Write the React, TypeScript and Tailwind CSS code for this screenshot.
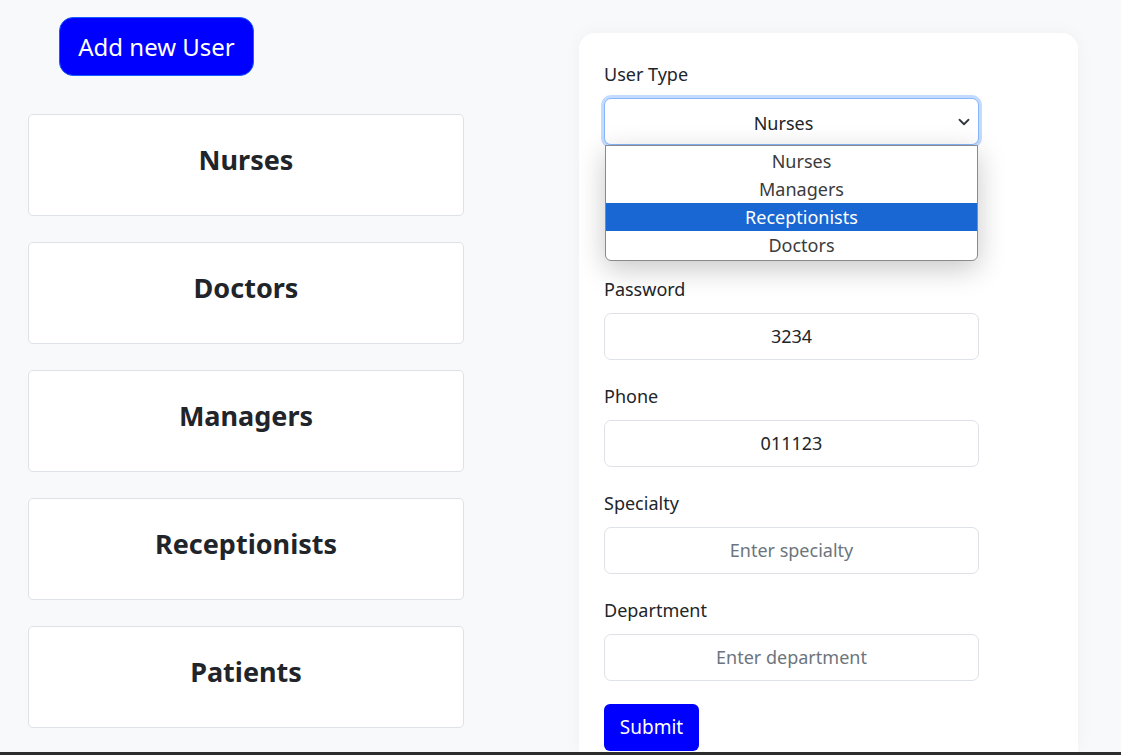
import React from "react";

const font = { fontFamily: '"Noto Sans", "Open Sans", sans-serif' };

function Field({ label, value, placeholder, mb = "mb-[24px]" }: { label: string; value?: string; placeholder?: string; mb?: string }) {
  return (
    <div className={mb}>
      <div className="h-6 leading-6 text-[18px] text-[#212529] mb-[12px]">{label}</div>
      <div className="w-[375px] h-[47px] rounded-[7px] border border-[#dee2e6] bg-white flex items-center justify-center text-[18px]">
        {value ? <span className="text-[#212529]">{value}</span> : <span className="text-[#6c757d]">{placeholder}</span>}
      </div>
    </div>
  );
}

export default function App() {
  const cards = ["Nurses", "Doctors", "Managers", "Receptionists", "Patients"];
  const options = ["Nurses", "Managers", "Receptionists", "Doctors"];
  return (
    <div className="h-[755px] w-[1121px] flex flex-col bg-[#f8f9fa] overflow-hidden" style={font}>
      <div className="flex-1 flex overflow-hidden">
        <div className="ml-[28px] w-[436px] flex flex-col">
          <div className="mt-[17px] ml-[31px] w-[195px] h-[59px] rounded-[14px] bg-[#0000ff] border border-[#1a5cff] flex items-center justify-center text-white text-[24px]">
            <span className="mt-[1px]">Add new User</span>
          </div>
          <div className="mt-[38px] flex flex-col gap-[26px]">
            {cards.map((c) => (
              <div key={c} className="h-[102px] rounded-[5px] border border-[#dee2e6] bg-white flex items-center justify-center">
                <span className="text-[27px] font-bold text-[#212529] -mt-[9px]">{c}</span>
              </div>
            ))}
          </div>
        </div>
        <div className="ml-[115px] mt-[33px] w-[499px] bg-white rounded-t-[16px] shadow-[0_0_18px_rgba(0,0,0,0.04)] pl-[25px] pt-[29px]">
          <div className="mb-[25px] relative">
            <div className="h-6 leading-6 text-[18px] text-[#212529] mb-[12px]">User Type</div>
            <div className="w-[375px] h-[47px] rounded-[7px] border border-[#86b7fe] shadow-[0_0_0_3px_rgba(13,110,253,0.25)] bg-white flex items-center relative text-[18px] text-[#212529] pl-[16px] pr-[32px]">
              <span className="flex-1 text-center pt-[3px]">Nurses</span>
              <svg className="absolute right-[8px] top-[17px]" width="12" height="12" viewBox="0 0 16 16" fill="none">
                <path d="M2 5l6 6 6-6" stroke="#343a40" strokeWidth="2.4" strokeLinecap="round" strokeLinejoin="round" />
              </svg>
            </div>
            <div className="absolute left-[1px] top-[83px] w-[373px] bg-white border border-[#8a8a8a] rounded-b-[6px] shadow-[0_8px_28px_rgba(0,0,0,0.22)] py-[1px] z-10 overflow-hidden">
              {options.map((o) => (
                <div
                  key={o}
                  className={
                    "h-[28px] leading-[28px] text-center text-[18px] pl-[20px] " +
                    (o === "Receptionists" ? "bg-[#1967d2] text-white" : "text-[#3b3b3b]")
                  }
                >
                  {o}
                </div>
              ))}
            </div>
          </div>
          {/* field hidden under the open dropdown */}
          <div className="h-[107px]" />
          <Field label="Password" value="3234" />
          <Field label="Phone" value="011123" />
          <Field label="Specialty" placeholder="Enter specialty" />
          <Field label="Department" placeholder="Enter department" />
          <div className="-mt-[1px] w-[95px] h-[47px] rounded-[6px] bg-[#0000ff] text-white text-[19px] flex items-center justify-center">
            Submit
          </div>
        </div>
      </div>
      <div className="h-[3px] bg-[#2d2d2d]" />
    </div>
  );
}
